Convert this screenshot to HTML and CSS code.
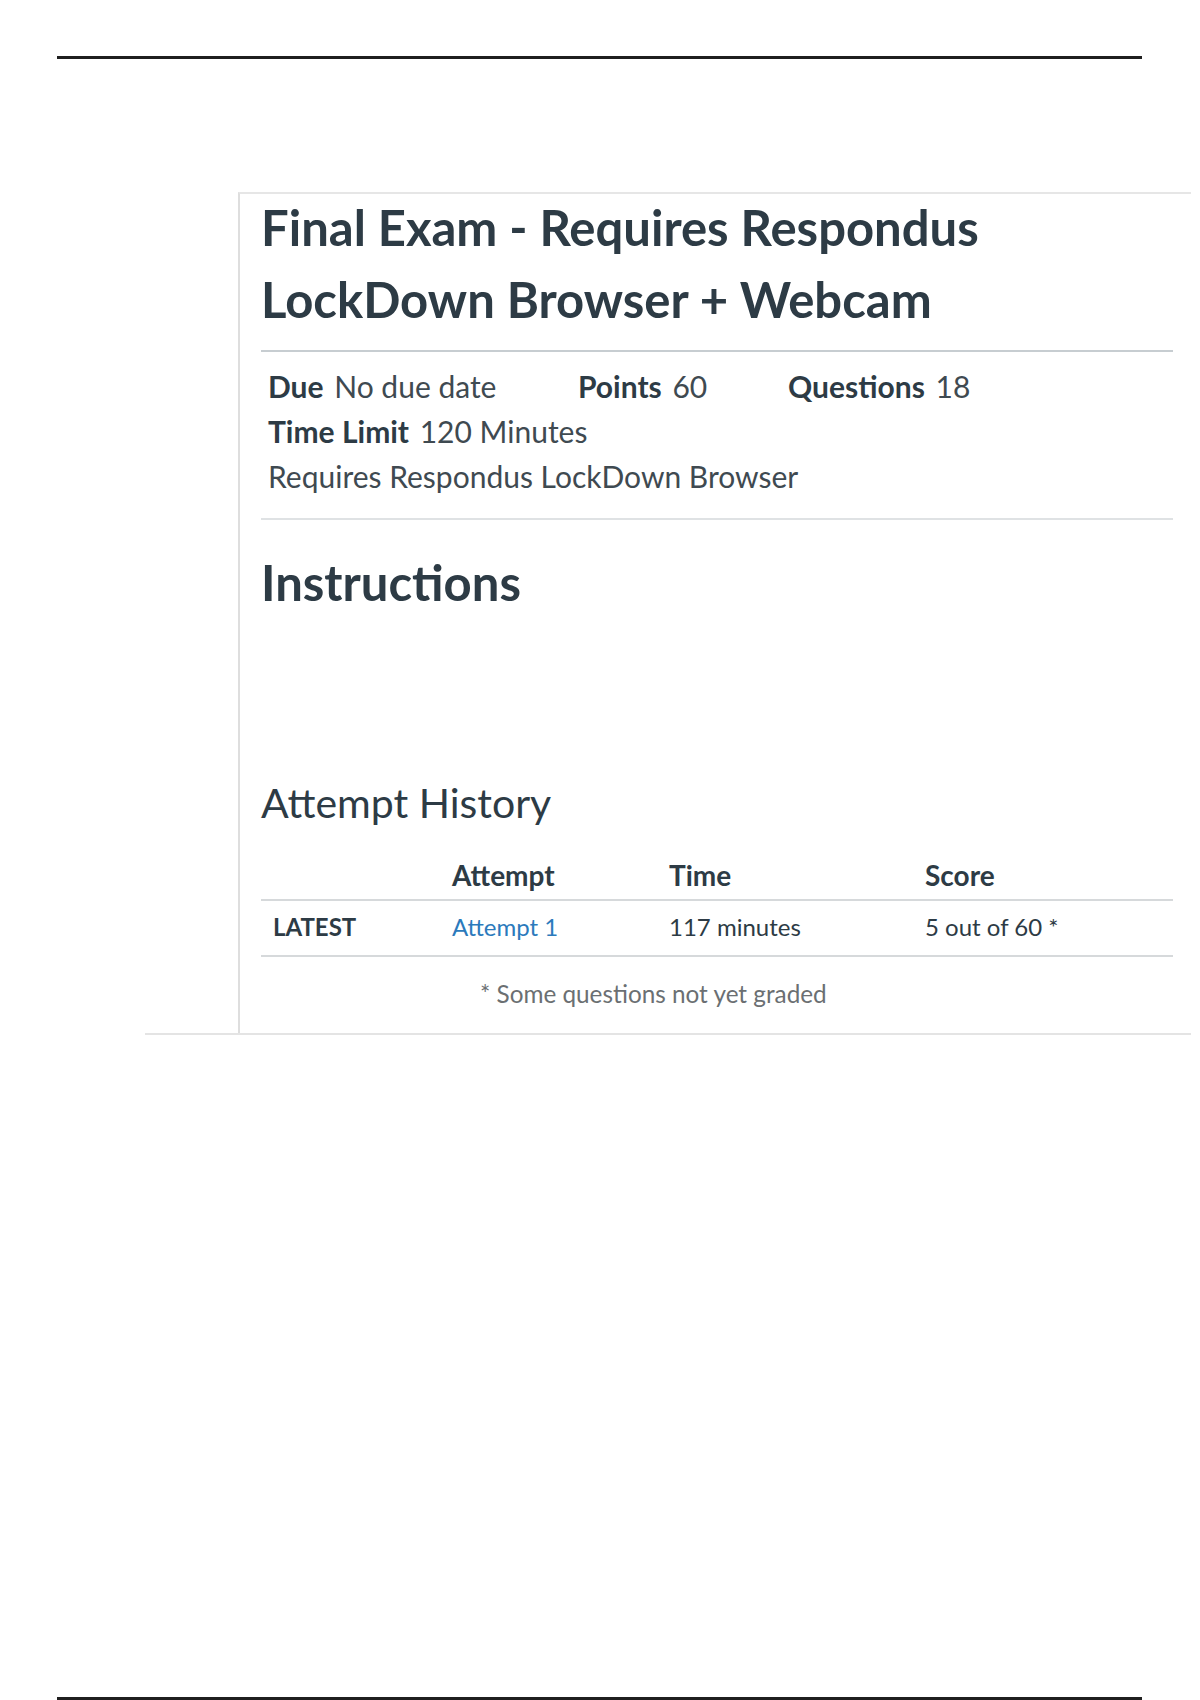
FILE: index.html
```html
<!DOCTYPE html>
<html>
<head>
<meta charset="utf-8">
<link rel="stylesheet" href="styles.css">
</head>
<body>
<div class="page">
  <div class="rule rule-top"></div>
  <div class="frame">
    <div class="card">
      <h1 class="title">Final Exam - Requires Respondus LockDown Browser + Webcam</h1>
      <div class="meta">
        <div class="meta-row">
          <span class="meta-item meta-due"><b>Due</b> No due date</span>
          <span class="meta-item meta-points"><b>Points</b> 60</span>
          <span class="meta-item"><b>Questions</b> 18</span>
        </div>
        <div class="meta-row">
          <span class="meta-item"><b>Time Limit</b> 120 Minutes</span>
        </div>
        <div class="meta-row">
          <span class="meta-item">Requires Respondus LockDown Browser</span>
        </div>
      </div>
      <h2 class="instructions">Instructions</h2>
      <h3 class="history">Attempt History</h3>
      <div class="table">
        <div class="tr thead">
          <div class="c c1"></div>
          <div class="c c2">Attempt</div>
          <div class="c c3">Time</div>
          <div class="c c4">Score</div>
        </div>
        <div class="tr tbody">
          <div class="c c1 latest">LATEST</div>
          <div class="c c2"><a class="link" href="#">Attempt 1</a></div>
          <div class="c c3">117 minutes</div>
          <div class="c c4">5 out of 60 *</div>
        </div>
      </div>
      <p class="note">* Some questions not yet graded</p>
    </div>
  </div>
  <div class="spacer"></div>
  <div class="rule rule-bottom"></div>
</div>
</body>
</html>
```
FILE: styles.css
```css
* { box-sizing: border-box; }
html, body { margin: 0; padding: 0; background: #fff; }
body { font-family: Lato, "Open Sans", "Liberation Sans", sans-serif; color: #2d3b45; }
.page { width: 1200px; height: 1700px; display: flex; flex-direction: column; }
.rule { height: 3px; background: #1f1f1f; margin: 0 58px 0 57px; }
.rule-top { margin-top: 56px; }
.frame {
  margin-top: 133px;
  margin-left: 145px;
  width: 1046px;
  border-bottom: 2px solid #e4e4e4;
}
.card {
  margin-left: 93px;
  border-left: 2px solid #dedede;
  border-top: 2px solid #e6e6e6;
  padding: 0 18px 0 21px;
}
.title {
  margin: -3px 0 0 0;
  font-size: 49px;
  line-height: 72px;
  font-weight: 700;
  color: #2d3b45;
  padding: 0 140px 15px 0;
  border-bottom: 2px solid #c7cdd1;
}
.meta { padding: 12px 0 19px 7px; border-bottom: 2px solid #dfe2e4; font-size: 30px; line-height: 45px; color: #3f4a51; }
.meta b { font-weight: 700; margin-right: 3px; color: #2d3b45; }
.meta-row { display: flex; }
.meta-due { width: 310px; }
.meta-points { width: 210px; }
.instructions { margin: 0; padding-top: 19px; font-size: 49px; line-height: 86px; font-weight: 700; color: #2d3b45; }
.history { margin: 0; padding-top: 153px; font-size: 41px; line-height: 50px; font-weight: 400; color: #2d3b45; }
.table { margin-top: 23px; font-size: 24px; }
.tr { display: flex; align-items: center; }
.thead { height: 50px; border-bottom: 2px solid #d6d9db; font-weight: 700; font-size: 28px; }
.tbody { height: 56px; padding-bottom: 3px; border-bottom: 2px solid #d6d9db; }
.c1 { width: 191px; padding-left: 12px; }
.c2 { width: 217px; }
.c3 { width: 256px; }
.latest { font-weight: 700; font-size: 24px; }
.link { color: #2b7abc; text-decoration: none; }
.note { margin: 0; padding: 22px 0 0 219px; height: 76px; font-size: 24.3px; line-height: 29px; color: #6b6f72; }
.spacer { flex: 1; }
```
